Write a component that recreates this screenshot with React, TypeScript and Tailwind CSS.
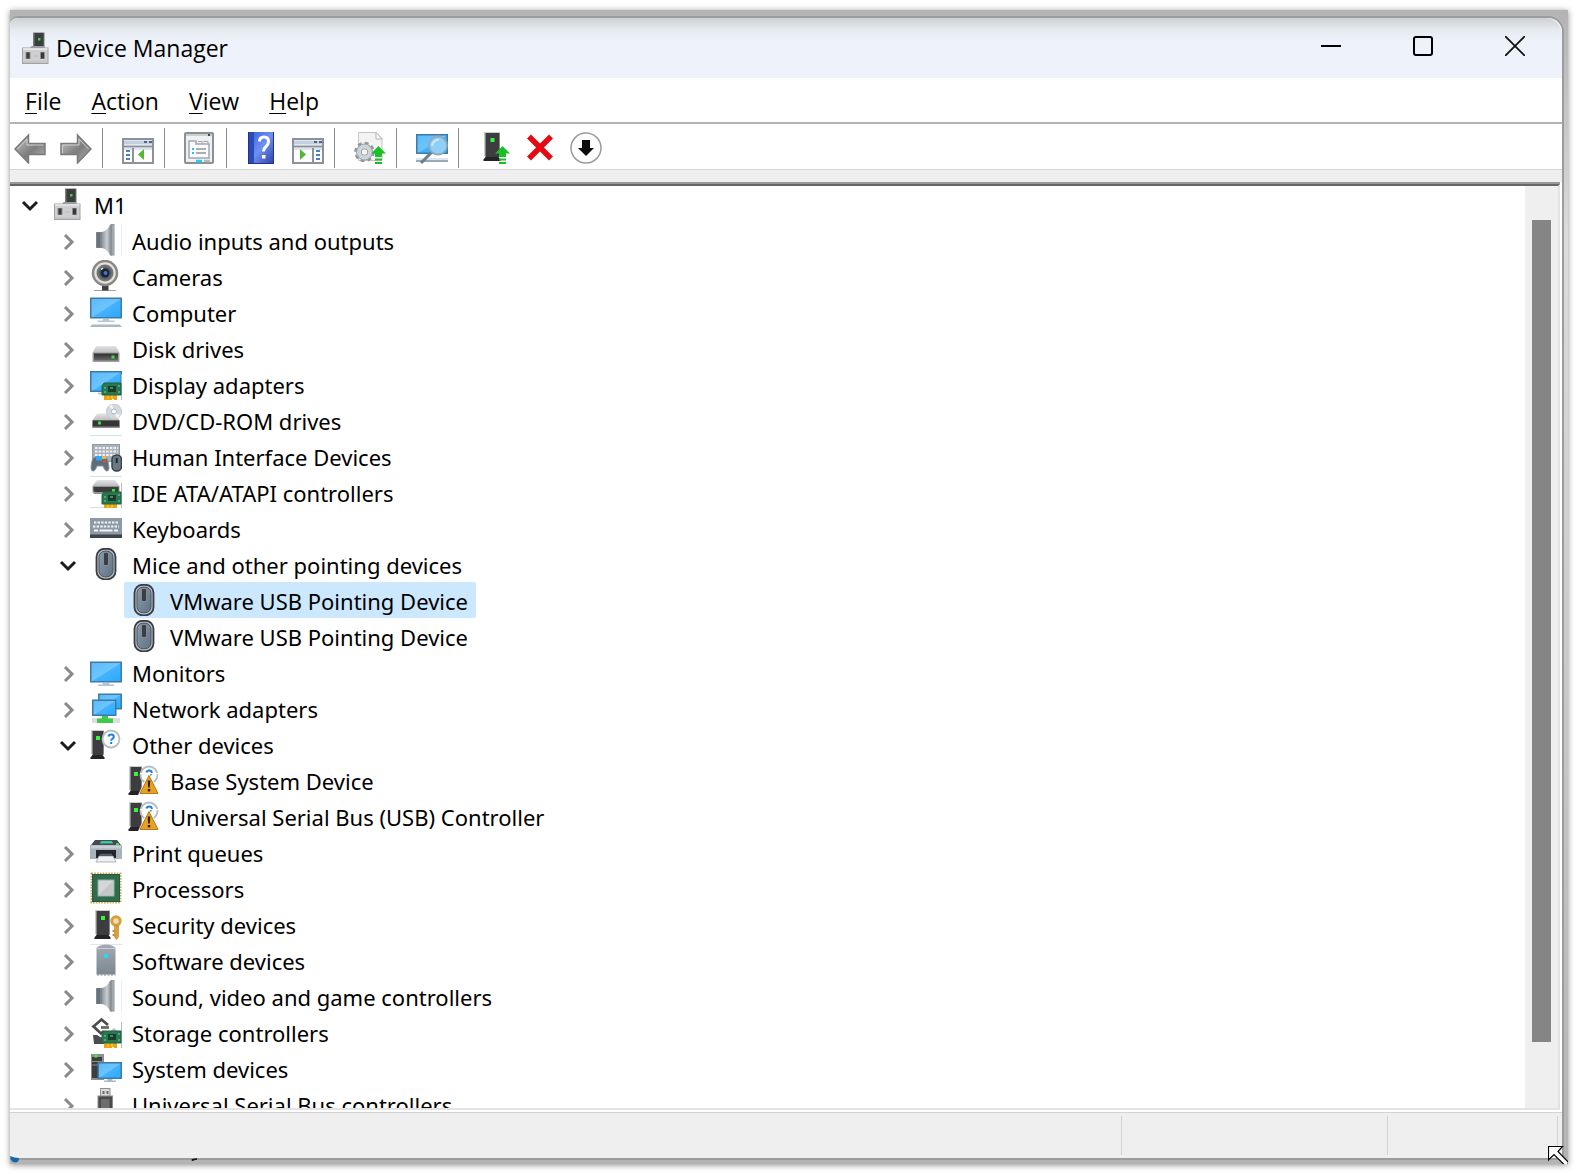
import React from "react"

type IconProps = { className?: string }
type IconType = React.ComponentType<IconProps>

function Svg({ children, className = "size-8 shrink-0" }: { children: React.ReactNode; className?: string }) {
  return (
    <svg viewBox="0 0 32 32" className={className} aria-hidden="true">
      {children}
    </svg>
  )
}

/* Gradients shared by every icon */
function Gradients() {
  return (
    <svg className="absolute size-0" aria-hidden="true">
      <defs>
        <linearGradient id="screen" x1="0" y1="0" x2="1" y2="1">
          <stop offset="0" stopColor="#5db9f5" />
          <stop offset="0.5" stopColor="#6cc5ff" />
          <stop offset="0.52" stopColor="#45b3fd" />
          <stop offset="1" stopColor="#2ba8fb" />
        </linearGradient>
        <linearGradient id="steel" x1="0" y1="0" x2="1" y2="0">
          <stop offset="0" stopColor="#8f979e" />
          <stop offset="0.5" stopColor="#c9ced2" />
          <stop offset="1" stopColor="#70777d" />
        </linearGradient>
        <linearGradient id="top" x1="0" y1="0" x2="0" y2="1">
          <stop offset="0" stopColor="#e4e4e6" />
          <stop offset="1" stopColor="#bcbcbf" />
        </linearGradient>
        <linearGradient id="front" x1="0" y1="0" x2="0" y2="1">
          <stop offset="0" stopColor="#2e2e2e" />
          <stop offset="1" stopColor="#6a6a6a" />
        </linearGradient>
        <linearGradient id="mouse" x1="0" y1="0" x2="1" y2="1">
          <stop offset="0" stopColor="#8d9dae" />
          <stop offset="1" stopColor="#5f7184" />
        </linearGradient>
        <linearGradient id="software" x1="0" y1="0" x2="0" y2="1">
          <stop offset="0" stopColor="#a2abb3" />
          <stop offset="1" stopColor="#7c8790" />
        </linearGradient>
        <linearGradient id="arrow" x1="0" y1="0" x2="1" y2="1">
          <stop offset="0" stopColor="#c9c9c9" />
          <stop offset="0.55" stopColor="#7d7d7d" />
          <stop offset="1" stopColor="#b5b5b5" />
        </linearGradient>
        <linearGradient id="help" x1="0" y1="0" x2="1" y2="1">
          <stop offset="0" stopColor="#2f5fe0" />
          <stop offset="0.5" stopColor="#6f8ff0" />
          <stop offset="1" stopColor="#2b3fa8" />
        </linearGradient>
      </defs>
    </svg>
  )
}

function Screen({ x, y, w, h }: { x: number; y: number; w: number; h: number }) {
  return <rect x={x + 0.75} y={y + 0.75} width={w - 1.5} height={h - 1.5} fill="url(#screen)" stroke="#3c7ba6" strokeWidth="1.5" />
}

function Board({ y = 15 }: { y?: number }) {
  return (
    <g transform={`translate(0 ${y})`}>
      <path d="M31.5 -9V17" stroke="#b4b9bd" strokeWidth="1" />
      <path d="M14 12h13v5h-3v-1h-2v1h-8z" fill="#f0a20c" />
      <path d="M18 12v4M22 12v4" stroke="#ffd34d" />
      <path d="M14 0h17v12H12V3z" fill="#27784f" stroke="#1c6340" />
      <rect x="18" y="3" width="8" height="6" fill="#173c2b" />
      <path d="M20 5h3M14 5h2M28 3h2M14 9h2M28 9h2" stroke="#7fd1a2" strokeWidth="1.2" />
    </g>
  )
}

function Tower({ x = 1, y = 2, w = 13 }: { x?: number; y?: number; w?: number }) {
  return (
    <g transform={`translate(${x} ${y})`}>
      <path d={`M0 0h${w}v24H0z`} fill="#c9cbcd" />
      <path d={`M1.500 1h${w - 2}v24h-${w - 2}z`} fill="#3d3d3f" />
      <path d={`M-0.500 29v-1.500l2-2.500h${w - 3}l2 2.500v1.500z`} fill="#232325" />
      <rect x={w / 2 - 1.5} y="6" width="4" height="4" fill="#37f53a" />
    </g>
  )
}

function UpArrow() {
  return (
    <path d="M24.500 14l7.500 7.500h-4V25h-7v-3.500h-4zM21 26.500h7v2h-7zM21 30h7v2h-7z" fill="#1dbf28" />
  )
}

function HostIcon({ className }: IconProps) {
  return (
    <Svg className={className}>
      <rect x="13" y="0.500" width="11.500" height="15" fill="#77797b" />
      <rect x="14.500" y="1" width="9" height="14" fill="#3b3d3e" />
      <rect x="18" y="6" width="2.500" height="2.500" fill="#38d83c" />
      <path d="M10 16l1.500-2h13v2z" fill="#9a9c9e" />
      <rect x="2.500" y="16" width="25.500" height="15.500" fill="#cfcfd1" stroke="#a2a2a5" />
      <path d="M3 17h24.500" stroke="#ececee" strokeWidth="1.500" />
      <path d="M13 24h5M3 30h25" stroke="#bcbcbf" />
      <rect x="5.500" y="20" width="5" height="7" fill="#8c8c8f" />
      <rect x="20" y="20" width="5" height="7" fill="#8c8c8f" />
      <rect x="6.500" y="20.500" width="3" height="6" fill="#3a3a3d" />
      <rect x="21" y="20.500" width="3" height="6" fill="#3a3a3d" />
    </Svg>
  )
}

function SpeakerIcon() {
  return (
    <Svg>
      <path d="M6 8h6v16H6z" fill="#7d868e" />
      <path d="M7 8.500h3v15H7z" fill="#67727c" />
      <path d="M12 8q6-1.500 8-7.500H22V31.500H20q-2-6-8-7.500z" fill="url(#steel)" />
      <path d="M21 0h3.500v31.500H21z" fill="#8b9197" />
      <path d="M22.500 0.500h1v30h-1z" fill="#b9bec2" />
      <path d="M31.500 0v32" stroke="#e8eff5" />
    </Svg>
  )
}

function CameraIcon() {
  return (
    <Svg>
      <path d="M4 30.500h22" stroke="#a2a2a2" />
      <rect x="12" y="24" width="6.500" height="6.500" fill="#3e3e3e" />
      <circle cx="15" cy="13" r="12" fill="#e2e2e2" stroke="#8c8783" strokeWidth="2.500" />
      <circle cx="15" cy="13" r="7.500" fill="#57606c" stroke="#77736f" strokeWidth="2" />
      <circle cx="15" cy="13" r="4.500" fill="#1a2433" />
      <circle cx="15.500" cy="13" r="2" fill="#3f7ac2" />
      <path d="M11 9.500l2-1.500" stroke="#dfe6ee" strokeWidth="1.500" />
    </Svg>
  )
}

function ComputerIcon() {
  return (
    <Svg>
      <Screen x={0} y={1.5} w={32} h={21} />
      <path d="M13 23h6v1.500h5.500V26h-17v-1.500H13z" fill="#b8c6d2" />
      <path d="M2 28.500h28l2 2.500H0z" fill="#a9b9c8" />
    </Svg>
  )
}

function DiskIcon() {
  return (
    <Svg>
      <path d="M6 14h20l3.500 7h-27z" fill="url(#top)" />
      <rect x="2.500" y="20.500" width="27" height="9.500" rx="1" fill="#9d9d9d" />
      <rect x="4" y="21.500" width="24" height="7" fill="url(#front)" />
      <rect x="21.500" y="23.500" width="3" height="3" fill="#35e43b" />
    </Svg>
  )
}

function DisplayIcon() {
  return (
    <Svg>
      <Screen x={0} y={3} w={32} h={21} />
      <path d="M8 25.500h6" stroke="#a9b9c8" strokeWidth="1.500" />
      <Board />
    </Svg>
  )
}

function DvdIcon() {
  return (
    <Svg>
      <path d="M0 31.500h32" stroke="#cfe2f2" />
      <path d="M7 9.500h18l4.500 7h-27z" fill="url(#top)" />
      <circle cx="24" cy="7.500" r="7.500" fill="#d3dadf" stroke="#c2c9ce" />
      <path d="M24 7.500L19 2l3-1.500zM24 7.500l6 4-3 3z" fill="#f1f4f6" />
      <circle cx="24" cy="7.500" r="2.500" fill="#fff" stroke="#a9b5bf" />
      <rect x="2" y="16" width="28" height="8" rx="1" fill="#8f8f8f" />
      <rect x="3" y="16.500" width="26" height="6" fill="#353535" />
      <rect x="8" y="17.500" width="3" height="3" fill="#35e43b" />
    </Svg>
  )
}

function HidIcon() {
  return (
    <Svg>
      <rect x="2.500" y="4.500" width="27" height="17" fill="#aab3bb" stroke="#929ba3" />
      <path d="M5 8h23M5 11.500h23M5 15h23" stroke="#eff1f3" strokeWidth="2" strokeDasharray="2.500 1.200" />
      <path d="M5 17q-3.500 1-4 11q0 3.500 2.500 3q2-.5 3.500-5h6q1.500 4.500 3.500 5q2.500 .5 2.500-3q-.5-10-4-11z" fill="#5f6d7b" stroke="#8996a2" />
      <rect x="6" y="16" width="6" height="4.500" fill="#35a6f5" />
      <path d="M12 16h4v3h-4z" fill="#f5b03a" />
      <path d="M13 20h3v2h-3z" fill="#e24a2b" />
      <rect x="22" y="15" width="9.500" height="16" rx="4.500" fill="#6b7987" stroke="#39424b" strokeWidth="1.500" />
      <path d="M26.700 18v5" stroke="#1f252b" strokeWidth="2" />
    </Svg>
  )
}

function IdeIcon() {
  return (
    <Svg>
      <path d="M0 .5h32M0 31.500h14" stroke="#cfe2f2" />
      <path d="M7 4h18l4.500 6h-27z" fill="url(#top)" />
      <path d="M2.500 10h27v8h-24q-3 0-3-3z" fill="#929292" />
      <path d="M3.500 11h25v5H6q-2.500 0-2.500-2z" fill="#3c3c3c" />
      <rect x="22" y="13" width="3" height="3" fill="#35e43b" />
      <Board y={16} />
    </Svg>
  )
}

function KeyboardIcon() {
  return (
    <Svg>
      <rect x="0" y="6" width="32" height="20" fill="#8d99a5" />
      <rect x="0" y="22.500" width="32" height="3.500" fill="#3d444b" />
      <path d="M4 10.500h25" stroke="#f1f3f5" strokeWidth="2.200" strokeDasharray="2.400 1.200" />
      <path d="M3 14.500h26" stroke="#f1f3f5" strokeWidth="2.200" strokeDasharray="2.400 1.200" />
      <path d="M4 18.500h4M9.500 18.500h13M24 18.500h4" stroke="#f1f3f5" strokeWidth="2.200" />
    </Svg>
  )
}

function MouseIcon() {
  return (
    <Svg>
      <rect x="6.500" y="0.800" width="19" height="30.500" rx="8" fill="#b6bdc4" stroke="#3a3d41" strokeWidth="1.800" />
      <rect x="9" y="3.200" width="14" height="25.600" rx="6" fill="url(#mouse)" stroke="#4a5663" />
      <rect x="13.200" y="4" width="5.600" height="14" rx="1.500" fill="#7f8b96" />
      <rect x="14" y="5" width="4" height="12" rx="1" fill="#3a3e42" />
    </Svg>
  )
}

function MonitorIcon() {
  return (
    <Svg>
      <Screen x={0} y={5.5} w={32} h={21} />
      <path d="M12.500 27h7v1.500H24V30H8v-1.500h4.500z" fill="#b4c4d3" />
    </Svg>
  )
}

function NetworkIcon() {
  return (
    <Svg>
      <Screen x={8} y={1.5} w={24} h={16} />
      <path d="M2 28.500h28" stroke="#dcdfe1" strokeWidth="5" />
      <Screen x={2} y={7.5} w={24.5} h={16.5} />
      <path d="M12 24h6v2.500h5V31H7v-4.500h5z" fill="#3ecb47" />
    </Svg>
  )
}

function Bubble() {
  return (
    <>
      <circle cx="21" cy="11" r="8.500" fill="#fafcfd" stroke="#b9bdc1" strokeWidth="1.800" />
      <path d="M18.500 8.500q.5-2 2.800-2t2.500 2q0 1.300-1.300 2.200t-1.300 2" fill="none" stroke="#1c7fd0" strokeWidth="2" />
      <rect x="20.200" y="14" width="2" height="2" fill="#1c7fd0" />
    </>
  )
}

function UnknownIcon() {
  return (
    <Svg>
      <Tower />
      <Bubble />
    </Svg>
  )
}

function WarningIcon() {
  return (
    <Svg>
      <Tower />
      <Bubble />
      <path d="M12 9h18v1.200H12z" fill="#fff" />
      <path d="M21 8.500L32 31H10z" fill="#fff" />
      <path d="M21 11.500L30 29.500H12z" fill="#e9a125" stroke="#b97a12" strokeLinejoin="round" />
      <path d="M19.700 16.500h2.600l-.5 7h-1.600z" fill="#2e2106" />
      <rect x="19.800" y="25" width="2.400" height="2.400" fill="#2e2106" />
    </Svg>
  )
}

function PrinterIcon() {
  return (
    <Svg>
      <path d="M5 4h22l4 5H1z" fill="#474b50" />
      <path d="M11 5h11l1 2.500H10z" fill="#35c9a0" />
      <rect x="26" y="7" width="3" height="2" fill="#35e43b" />
      <path d="M0 9h32v14H0z" fill="#a7b2bd" />
      <path d="M1 9.500h30v3H1z" fill="#c6ced6" />
      <path d="M6 14h20v8H6z" fill="#24272a" />
      <path d="M9 20h14l3 6H6z" fill="#eef0f2" stroke="#9aa2aa" strokeWidth=".8" />
      <path d="M10 18.500h12" stroke="#5a6067" strokeWidth="1.500" />
    </Svg>
  )
}

function ProcessorIcon() {
  return (
    <Svg>
      <rect x="1.500" y="1.500" width="29" height="29" fill="none" stroke="#c9a74d" strokeWidth="2" strokeDasharray="1.600 1.200" />
      <rect x="2.500" y="2.500" width="27" height="27" fill="#2f6b4c" stroke="#245a3e" />
      <rect x="8" y="8" width="16" height="16" fill="#d5d6d7" stroke="#8fb29f" />
      <path d="M9 23L23 9v14z" fill="#c3c5c6" />
    </Svg>
  )
}

function SecurityIcon() {
  return (
    <Svg>
      <Tower x={5} w={15} />
      <circle cx="26" cy="13" r="4.200" fill="#f3dfae" stroke="#d2a03c" strokeWidth="3" />
      <path d="M24.500 18h4v11l-2 2.500-2-2.500z" fill="#d9a23a" stroke="#b9852a" strokeWidth=".6" />
      <path d="M22.500 22h3v2h-3zM22.500 26h3v2h-3z" fill="#c99332" />
    </Svg>
  )
}

function SoftwareIcon() {
  return (
    <Svg>
      <path d="M0 .5h32" stroke="#e3e6e9" />
      <path d="M6.500 4q3-3.500 9.500-3.500T25.500 4v26.500h-19z" fill="url(#software)" />
      <path d="M6.500 4.500h19" stroke="#c8ced3" />
      <path d="M7 31h18.500" stroke="#7d8389" strokeDasharray="2 1.500" />
      <rect x="14" y="10" width="4" height="4" fill="#2fd4f0" />
    </Svg>
  )
}

function StorageIcon() {
  return (
    <Svg>
      <path d="M18 9L11.500 3.500 3.500 10.500 11 17.500 14 15" fill="none" stroke="#4d4d4d" strokeWidth="2.800" />
      <path d="M11 11.500h8" stroke="#6a6a6a" strokeWidth="2.800" />
      <path d="M3 19h4l4 2.500 4-2v8.500H4z" fill="#4a4d4f" />
      <path d="M19 16l5-4 5 4z" fill="#b6c4cc" />
      <Board />
    </Svg>
  )
}

function SystemIcon() {
  return (
    <Svg>
      <rect x="1" y="2" width="13" height="26" fill="#8c8e90" />
      <rect x="2" y="5" width="10" height="21" fill="#3d3d3f" />
      <path d="M2 9.500h10M2 13h6" stroke="#8c8e90" />
      <rect x="4.500" y="2.500" width="3" height="3" fill="#37f53a" />
      <Screen x={7.5} y={10} w={24.5} h={17} />
      <path d="M17.500 27h5v1.500h3.500V30H14v-1.500h3.500z" fill="#a9b9c8" />
    </Svg>
  )
}

function UsbIcon() {
  return (
    <Svg>
      <rect x="10.500" y="0.500" width="9.500" height="8" fill="#dadada" stroke="#909090" />
      <path d="M12.500 3h2v3h-2zM16.500 3h2v3h-2z" fill="#6b6b6b" />
      <rect x="8" y="8" width="14.500" height="24" fill="#4a4a4a" stroke="#8c8c8c" />
      <rect x="11" y="11" width="8.500" height="21" fill="#6c6c6c" />
    </Svg>
  )
}

/* Toolbar icons */
function BackIcon() {
  return (
    <Svg>
      <path d="M1 17L14.500 3v8.500H31V22.500H14.500V31z" fill="url(#arrow)" stroke="#7a7a7a" strokeWidth="1.500" />
      <path d="M3.500 17L13 7v6h16.500" fill="none" stroke="#cfcfcf" />
    </Svg>
  )
}

function ForwardIcon() {
  return (
    <Svg>
      <path d="M31 17L17.500 3v8.500H1V22.500H17.500V31z" fill="url(#arrow)" stroke="#7a7a7a" strokeWidth="1.500" />
      <path d="M28.500 17L19 7v6H2.500V21" fill="none" stroke="#cfcfcf" />
    </Svg>
  )
}

function PaneFrame() {
  return (
    <>
      <rect x="1" y="7" width="30" height="24" fill="#fdfdfe" stroke="#8b929b" strokeWidth="2" />
      <path d="M2 10.500h28" stroke="#c2d0e2" strokeWidth="4" />
      <path d="M22 10h3M27 10h3" stroke="#55647a" strokeWidth="2" />
      <path d="M2 14.500h28" stroke="#8b929b" strokeWidth="2" />
      <path d="M2 17h28" stroke="#dfe4ea" strokeWidth="2" />
    </>
  )
}

function TreePaneIcon() {
  return (
    <Svg>
      <PaneFrame />
      <path d="M11 16v14" stroke="#8b929b" strokeWidth="2" />
      <path d="M4 19h4M4 23h4M4 27h4" stroke="#4a82c0" strokeWidth="2" />
      <path d="M22 17v11L16 22.500z" fill="#52b82f" />
    </Svg>
  )
}

function ActionPaneIcon() {
  return (
    <Svg>
      <PaneFrame />
      <path d="M21 16v14" stroke="#8b929b" strokeWidth="2" />
      <path d="M24 19h4M24 23h4M24 27h4" stroke="#4a82c0" strokeWidth="2" />
      <path d="M8 17v11L14 22.500z" fill="#52b82f" />
    </Svg>
  )
}

function PropertiesIcon() {
  return (
    <Svg>
      <rect x="1" y="1" width="28" height="30" rx="1" fill="#f0f1f2" stroke="#8b9092" strokeWidth="2" />
      <path d="M2 3h26" stroke="#c9d0d2" strokeWidth="2" />
      <path d="M24 3h2" stroke="#3b4a63" strokeWidth="2" />
      <path d="M5 9h7v3h13v14H5z" fill="#fcfcfd" stroke="#a3a5b5" strokeWidth="1.500" />
      <path d="M14 9.500h4v2M19 9.500h5v2" fill="none" stroke="#a3a5b5" />
      <path d="M8 17h2M8 21h2" stroke="#22c3ee" strokeWidth="2" />
      <path d="M12 17h10M12 21h10" stroke="#8f949c" strokeWidth="1.500" />
      <path d="M12 29h6" stroke="#16d2fb" strokeWidth="2.500" />
      <path d="M20 29h6" stroke="#b5b9bb" strokeWidth="2.500" />
    </Svg>
  )
}

function HelpIcon() {
  return (
    <Svg>
      <rect x="2" y="0" width="26" height="32" fill="url(#help)" />
      <path d="M2 0h6v32H2z" fill="#2d4ab4" />
      <path d="M2.500 0v32M27.500 0v32M2 31.500h26" stroke="#1d3190" />
      <path d="M13.500 9.500q0-4.500 4.500-4.500t4.500 4.500q0 3-2.500 5t-2.500 5" fill="none" stroke="#fff" strokeWidth="3" />
      <rect x="16" y="23" width="3.500" height="3.500" fill="#fff" />
    </Svg>
  )
}

function UpdateDriverIcon() {
  return (
    <Svg>
      <path d="M4.500 .5H22l6 6v22H4.500z" fill="#f3f3f4" stroke="#c6c6c8" />
      <path d="M22 .5v6.500h6z" fill="#fff" stroke="#b3b3b6" />
      <circle cx="10.500" cy="20" r="8.500" fill="none" stroke="#8f979d" strokeWidth="3.500" strokeDasharray="3.600 3.075" />
      <circle cx="10.500" cy="20" r="5.500" fill="none" stroke="#99a1a7" strokeWidth="6" />
      <circle cx="10.500" cy="20" r="5.500" fill="none" stroke="#ced4d8" strokeWidth="4" />
      <circle cx="10.500" cy="20" r="2.600" fill="#f3f3f4" />
      <UpArrow />
    </Svg>
  )
}

function ScanIcon() {
  return (
    <Svg>
      <Screen x={0} y={2} w={32} h={20} />
      <path d="M0 26h32v3H0z" fill="#dfe6ec" />
      <path d="M0 29h32" stroke="#98a9b8" strokeWidth="2" />
      <path d="M16 20L5 31" stroke="#6d7f8d" strokeWidth="3" />
      <circle cx="22" cy="13.500" r="9" fill="#8fd0fb" stroke="#93a8b7" strokeWidth="1.800" />
      <path d="M16 14q1-6 7-6.500" fill="none" stroke="#c9e9ff" strokeWidth="1.800" />
    </Svg>
  )
}

function EnableIcon() {
  return (
    <Svg>
      <Tower x={6} y={0} w={16} />
      <UpArrow />
    </Svg>
  )
}

function UninstallIcon() {
  return (
    <Svg>
      <path d="M5 4.500l22 22M27 4.500l-22 22" stroke="#e50914" strokeWidth="5.500" />
    </Svg>
  )
}

function DisableIcon() {
  return (
    <Svg>
      <circle cx="16" cy="16" r="15" fill="#fdfdfd" stroke="#9c9c9c" strokeWidth="1.500" />
      <path d="M12 8h8v8h4l-8 8-8-8h4z" fill="#0c0c0c" />
    </Svg>
  )
}

interface Device {
  label: string
  icon: IconType
  open?: boolean
  selected?: boolean
  leaf?: boolean
  children?: Device[]
}

const DEVICES: Device[] = [
  { label: "Audio inputs and outputs", icon: SpeakerIcon },
  { label: "Cameras", icon: CameraIcon },
  { label: "Computer", icon: ComputerIcon },
  { label: "Disk drives", icon: DiskIcon },
  { label: "Display adapters", icon: DisplayIcon },
  { label: "DVD/CD-ROM drives", icon: DvdIcon },
  { label: "Human Interface Devices", icon: HidIcon },
  { label: "IDE ATA/ATAPI controllers", icon: IdeIcon },
  { label: "Keyboards", icon: KeyboardIcon },
  {
    label: "Mice and other pointing devices",
    icon: MouseIcon,
    open: true,
    children: [
      { label: "VMware USB Pointing Device", icon: MouseIcon, leaf: true, selected: true },
      { label: "VMware USB Pointing Device", icon: MouseIcon, leaf: true },
    ],
  },
  { label: "Monitors", icon: MonitorIcon },
  { label: "Network adapters", icon: NetworkIcon },
  {
    label: "Other devices",
    icon: UnknownIcon,
    open: true,
    children: [
      { label: "Base System Device", icon: WarningIcon, leaf: true },
      { label: "Universal Serial Bus (USB) Controller", icon: WarningIcon, leaf: true },
    ],
  },
  { label: "Print queues", icon: PrinterIcon },
  { label: "Processors", icon: ProcessorIcon },
  { label: "Security devices", icon: SecurityIcon },
  { label: "Software devices", icon: SoftwareIcon },
  { label: "Sound, video and game controllers", icon: SpeakerIcon },
  { label: "Storage controllers", icon: StorageIcon },
  { label: "System devices", icon: SystemIcon },
  { label: "Universal Serial Bus controllers", icon: UsbIcon },
]

const ROOT: Device = { label: "M1", icon: HostIcon, open: true, children: DEVICES }

const TOOL_GROUPS: { label: string; icon: IconType }[][] = [
  [
    { label: "Back", icon: BackIcon },
    { label: "Forward", icon: ForwardIcon },
  ],
  [{ label: "Show/Hide Console Tree", icon: TreePaneIcon }],
  [{ label: "Properties", icon: PropertiesIcon }],
  [
    { label: "Help", icon: HelpIcon },
    { label: "Show/Hide Action Pane", icon: ActionPaneIcon },
  ],
  [{ label: "Update device driver", icon: UpdateDriverIcon }],
  [{ label: "Scan for hardware changes", icon: ScanIcon }],
  [
    { label: "Enable device", icon: EnableIcon },
    { label: "Uninstall device", icon: UninstallIcon },
    { label: "Disable device", icon: DisableIcon },
  ],
]

const MENUS = ["File", "Action", "View", "Help"]

function Expander({ open, label }: { open?: boolean; label: string }) {
  return (
    <button
      type="button"
      aria-label={`${open ? "Collapse" : "Expand"} ${label}`}
      className="flex h-9 w-5 items-center justify-center pt-1"
    >
      <svg viewBox="0 0 20 20" className="size-5" fill="none" strokeWidth="3" aria-hidden="true">
        {open ? <path d="M3 6l7 7 7-7" stroke="#1c1c1c" /> : <path d="M7 3l7 7-7 7" stroke="#8a8a8a" />}
      </svg>
    </button>
  )
}

function TreeItem({ device }: { device: Device }) {
  const { label, icon: Icon, open, selected, leaf, children } = device
  return (
    <li role="treeitem" aria-expanded={open} aria-selected={selected}>
      <div className="flex h-9">
        {leaf ? <span className="w-5" /> : <Expander open={open} label={label} />}
        <span className={`ml-2 flex items-center rounded-xs pr-2 pl-1 ${selected ? "bg-[#cce8ff]" : ""}`}>
          <Icon className="size-8 shrink-0" />
          <span className="ml-[10px] pt-[2px] whitespace-nowrap">{label}</span>
        </span>
      </div>
      {children && (
        <ul role="group" className="pl-[38px]">
          {children.map((child, i) => (
            <TreeItem key={i} device={child} />
          ))}
        </ul>
      )}
    </li>
  )
}

function TitleBar() {
  return (
    <header className="flex h-15 shrink-0 rounded-tl-lg rounded-tr-2xl bg-linear-to-b from-[#ccd1d6] via-[#e6ebf1] via-20% to-[#eef3fb] to-40%">
      <div className="flex flex-1 items-center pl-[10px]">
        <HostIcon className="size-8 shrink-0" />
        <h1 className="ml-1">Device Manager</h1>
      </div>
      <div className="flex h-14 pr-px">
        <button type="button" aria-label="Minimize" className="flex w-[92px] items-center justify-center">
          <svg viewBox="0 0 20 20" className="size-5" aria-hidden="true">
            <path d="M0 10h20" stroke="#000" strokeWidth="2" />
          </svg>
        </button>
        <button type="button" aria-label="Maximize" className="flex w-[92px] items-center justify-center">
          <svg viewBox="0 0 20 20" className="size-5" aria-hidden="true">
            <rect x="1" y="1" width="18" height="18" rx="2" fill="none" stroke="#000" strokeWidth="2" />
          </svg>
        </button>
        <button type="button" aria-label="Close" className="flex w-[92px] items-center justify-center">
          <svg viewBox="0 0 20 20" className="size-5" aria-hidden="true">
            <path d="M0 0l20 20M20 0L0 20" stroke="#111" strokeWidth="1.800" />
          </svg>
        </button>
      </div>
    </header>
  )
}

function Toolbar() {
  return (
    <div
      role="toolbar"
      aria-label="Standard"
      className="-ml-[3px] flex h-[46px] shrink-0 items-center border-b border-[#d8d8d8] bg-white pt-[3px]"
    >
      {TOOL_GROUPS.map((group, i) => (
        <React.Fragment key={i}>
          {i > 0 && <span className="mr-3 ml-[3px] h-10 w-px bg-[#8c8c8c]" />}
          {group.map(({ label, icon: Icon }) => (
            <button key={label} type="button" aria-label={label} className="flex w-[46px] justify-center">
              <Icon className="size-8 shrink-0" />
            </button>
          ))}
        </React.Fragment>
      ))}
    </div>
  )
}

export default function App() {
  return (
    <div className="relative h-screen overflow-hidden bg-white p-[10px] font-['Open_Sans',sans-serif] text-[23px] leading-8 text-black">
      <Gradients />
      <div className="relative flex h-full bg-linear-to-b from-[#b4b4b4] via-[#dcdcdc] via-20% to-[#b4b4b4] pt-[6px] pr-1 pb-1 shadow-[0_1px_6px_rgba(0,0,0,0.45)]">
        <main className="flex min-w-0 flex-1 flex-col overflow-hidden rounded-tl-lg rounded-tr-2xl border-t-2 border-r-2 border-b-2 border-[#9c9c9c] bg-white">
          <TitleBar />
          <nav className="flex h-[46px] shrink-0 items-center border-b-2 border-[#b3b3b3] pt-[2px]">
            {MENUS.map((menu) => (
              <button key={menu} type="button" className="px-[15px]">
                <span className="underline decoration-1 underline-offset-3">{menu[0]}</span>
                {menu.slice(1)}
              </button>
            ))}
          </nav>
          <Toolbar />
          <div className="h-3 shrink-0 bg-[#efefef]" />
          <div className="mr-[2px] flex min-h-0 flex-1 border-t-2 border-[#999999]">
            <div className="flex min-w-0 flex-1 border-t-2 border-r-2 border-b-2 border-t-[#666666] border-r-[#e3e3e3] border-b-[#e3e3e3]">
              <ul role="tree" className="min-w-0 flex-1 overflow-hidden pl-[10px] font-['Noto_Sans',sans-serif] text-[22px]">
                <TreeItem device={ROOT} />
              </ul>
              <div className="flex w-[33px] shrink-0 flex-col bg-[#efefef] pt-[34px] pr-[7px] pb-[66px] pl-[7px]">
                <div className="flex-1 bg-[#858585]" />
              </div>
            </div>
          </div>
          <footer className="mt-[2px] flex h-[46px] shrink-0 border-t border-[#d3d3d3] bg-[#efefef] py-[3px] pr-1">
            <div className="flex-1 border-r border-[#d3d3d3]" />
            <div className="w-[266px] border-r border-[#d3d3d3]" />
            <div className="w-[170px] border-r border-[#d3d3d3]" />
          </footer>
        </main>
        {/* Resize cursor */}
        <svg viewBox="0 0 20 18" className="absolute right-0 bottom-0 h-[18px] w-5" aria-hidden="true">
          <path d="M.5 .5h14L10 5.500 21 17l-3.500 3L6 8.500.5 14z" fill="#fff" stroke="#000" strokeWidth="1.200" />
        </svg>
        {/* Bits of the window underneath */}
        <svg viewBox="0 0 200 8" className="absolute bottom-0 left-0 h-2 w-[200px]" aria-hidden="true">
          <path d="M0 0q4 2 9 2Q9 6.500 5 6.500T0 0z" fill="#1166ad" />
          <path d="M182 4.500l5-1.500h-2l-3 .5z" fill="#111" stroke="#111" />
        </svg>
      </div>
    </div>
  )
}
